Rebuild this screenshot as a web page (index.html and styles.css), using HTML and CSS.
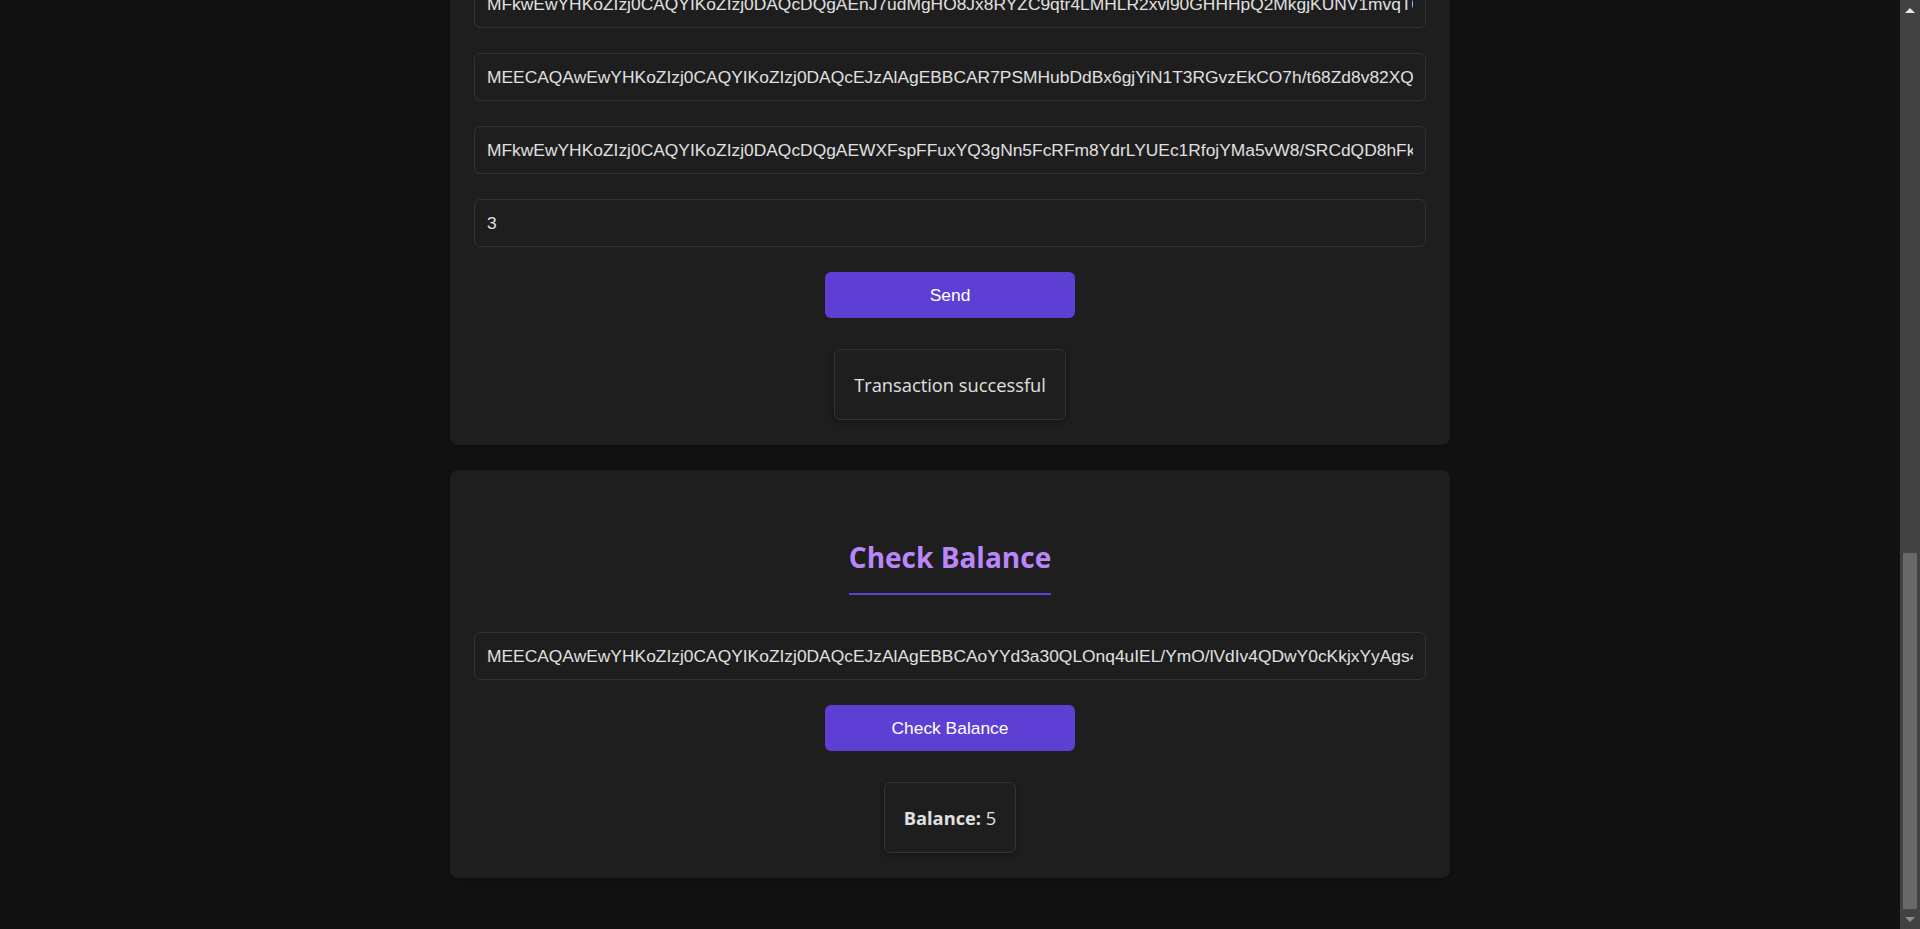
FILE: index.html
```html
<!DOCTYPE html>
<html lang="en">
<head>
<meta charset="utf-8">
<title>Simple Blockchain Wallet</title>
<link rel="stylesheet" href="styles.css">
</head>
<body>
<main class="container">
  <header class="page-header">
    <h1 class="page-title">Simple Blockchain Wallet</h1>
    <p class="page-sub">Generate keys, send coins and check balances</p>
  </header>

  <section class="card">
    <h2 class="card-title">Create Wallet</h2>
    <div class="form">
      <button class="btn" type="button">Generate Keys</button>
    </div>
    <div class="key-block">
      <div class="key-label">Public Key</div>
      <div class="key-value">MFkwEwYHKoZIzj0CAQYIKoZIzj0DAQcDQgAEnJ7udMgHO8Jx8RYZC9qtr4LMHLR2xvl90GHHHpQ2MkgjKUNV1mvqT0p3hQ6LwZ2sYk8nBf1rXc4uA7mDe9gJHoVt5iPl</div>
    </div>
    <div class="key-block">
      <div class="key-label">Private Key</div>
      <div class="key-value">MEECAQAwEwYHKoZIzj0CAQYIKoZIzj0DAQcEJzAlAgEBBCAR7PSMHubDdBx6gjYiN1T3RGvzEkCO7h/t68Zd8v82XQ==</div>
    </div>
  </section>

  <section class="card">
    <h2 class="card-title">Mine Block</h2>
    <div class="form">
      <input class="field" type="text" placeholder="Miner Public Key" value="MFkwEwYHKoZIzj0CAQYIKoZIzj0DAQcDQgAEnJ7udMgHO8Jx8RYZC9qtr4LMHLR2xvl90GHHHpQ2MkgjKUNV1mvqT0p3hQ6LwZ2sYk8nBf1rXc4uA7mDe9gJHoVt5iPl">
      <button class="btn" type="button">Mine</button>
    </div>
    <div class="result">Block mined successfully</div>
  </section>

  <section class="card">
    <h2 class="card-title">Send Transaction</h2>
    <div class="form">
      <input class="field" type="text" placeholder="Sender Public Key" value="MFkwEwYHKoZIzj0CAQYIKoZIzj0DAQcDQgAEnJ7udMgHO8Jx8RYZC9qtr4LMHLR2xvl90GHHHpQ2MkgjKUNV1mvqT0p3hQ6LwZ2sYk8nBf1rXc4uA7mDe9gJHoVt5iPl">
      <input class="field" type="text" placeholder="Sender Private Key" value="MEECAQAwEwYHKoZIzj0CAQYIKoZIzj0DAQcEJzAlAgEBBCAR7PSMHubDdBx6gjYiN1T3RGvzEkCO7h/t68Zd8v82XQ==">
      <input class="field" type="text" placeholder="Recipient Public Key" value="MFkwEwYHKoZIzj0CAQYIKoZIzj0DAQcDQgAEWXFspFFuxYQ3gNn5FcRFm8YdrLYUEc1RfojYMa5vW8/SRCdQD8hFk2pLx7Nq0ZbT4vWc9sGm1eHaYo3uJr6iKt5A">
      <input class="field" type="text" placeholder="Amount" value="3">
      <button class="btn" type="button">Send</button>
    </div>
    <div class="result">Transaction successful</div>
  </section>

  <section class="card">
    <h2 class="card-title">Check Balance</h2>
    <div class="form">
      <input class="field" type="text" placeholder="Public Key" value="MEECAQAwEwYHKoZIzj0CAQYIKoZIzj0DAQcEJzAlAgEBBCAoYYd3a30QLOnq4uIEL/YmO/lVdIv4QDwY0cKkjxYyAgs4R8==">
      <button class="btn" type="button">Check Balance</button>
    </div>
    <div class="result"><strong>Balance:</strong> 5</div>
  </section>
</main>

<div class="scrollbar" aria-hidden="true">
  <span class="sb-btn sb-up"></span>
  <span class="sb-track"><span class="sb-thumb"></span></span>
  <span class="sb-btn sb-down"></span>
</div>

<script src="script.js"></script>
</body>
</html>
```

FILE: styles.css
```css
:root {
  color-scheme: dark;
}

* {
  box-sizing: border-box;
}

html {
  background: #121212;
}

body {
  margin: 0;
  padding-right: 20px;
  background: #121212;
  color: #e0e0e0;
  font-family: "Open Sans", "Noto Sans", sans-serif;
}

.container {
  width: 1000px;
  margin: 0 auto;
  padding: 40px 0 51px;
  display: flex;
  flex-direction: column;
  gap: 25px;
}

.page-header {
  text-align: center;
  padding: 10px 0 5px;
}

.page-title {
  margin: 0 0 8px;
  font-size: 36px;
  line-height: 48px;
  color: #bb86fc;
}

.page-sub {
  margin: 0;
  font-size: 16px;
  color: #9e9e9e;
}

.card {
  background: #1e1e1e;
  border-radius: 8px;
  padding: 24px 24px 25px;
  box-shadow: 0 2px 8px rgba(0, 0, 0, 0.3);
}

.card-title {
  width: fit-content;
  margin: 44px auto 37px;
  padding-bottom: 17px;
  border-bottom: 2px solid #5d3fd3;
  color: #bb86fc;
  font-size: 28px;
  font-weight: 700;
  line-height: 38px;
}

.form {
  display: flex;
  flex-direction: column;
  gap: 25px;
}

.field {
  width: 100%;
  height: 48px;
  padding: 0 12px;
  border: 1px solid #333333;
  border-radius: 6px;
  background: #1e1e1e;
  color: #e0e0e0;
  font: 17.4px "Liberation Sans", Arial, sans-serif;
  outline: none;
}

.btn {
  align-self: center;
  width: 250px;
  height: 46px;
  border: 0;
  border-radius: 6px;
  background: #5d3fd3;
  color: #ffffff;
  font: 17.4px "Liberation Sans", Arial, sans-serif;
  cursor: pointer;
}

.result {
  width: fit-content;
  margin: 31px auto 0;
  padding: 22px 19px;
  border: 1px solid #333333;
  border-radius: 6px;
  background: #1e1e1e;
  box-shadow: 0 2px 6px rgba(0, 0, 0, 0.35);
  font-size: 18.3px;
  line-height: 25px;
  color: #e0e0e0;
}

.key-block {
  margin-top: 25px;
}

.key-label {
  margin-bottom: 8px;
  font-size: 16px;
  font-weight: 700;
  color: #bb86fc;
}

.key-value {
  padding: 14px 12px;
  border: 1px solid #333333;
  border-radius: 6px;
  font: 15px/22px "Liberation Mono", monospace;
  word-break: break-all;
  color: #e0e0e0;
}

/* browser scrollbar, drawn over the right edge of the viewport */
.scrollbar {
  position: fixed;
  top: 0;
  right: 0;
  width: 20px;
  height: 100vh;
  display: flex;
  flex-direction: column;
  background: #424242;
}

.sb-btn {
  height: 20px;
  flex: 0 0 20px;
  display: flex;
  align-items: center;
  justify-content: center;
}

.sb-up::before {
  content: "";
  border-left: 5px solid transparent;
  border-right: 5px solid transparent;
  border-bottom: 5px solid #e8e8e8;
}

.sb-down::before {
  content: "";
  border-left: 5px solid transparent;
  border-right: 5px solid transparent;
  border-top: 5px solid #8e8e8e;
}

.sb-track {
  flex: 1;
  display: flex;
  flex-direction: column;
  justify-content: flex-end;
  padding: 0 3px;
}

.sb-thumb {
  height: 356px;
  background: #686868;
}
```

FILE: script.js
```js
function scrollToBottom() {
  window.scrollTo(0, document.documentElement.scrollHeight);
}
scrollToBottom();
window.addEventListener('load', scrollToBottom);
```
